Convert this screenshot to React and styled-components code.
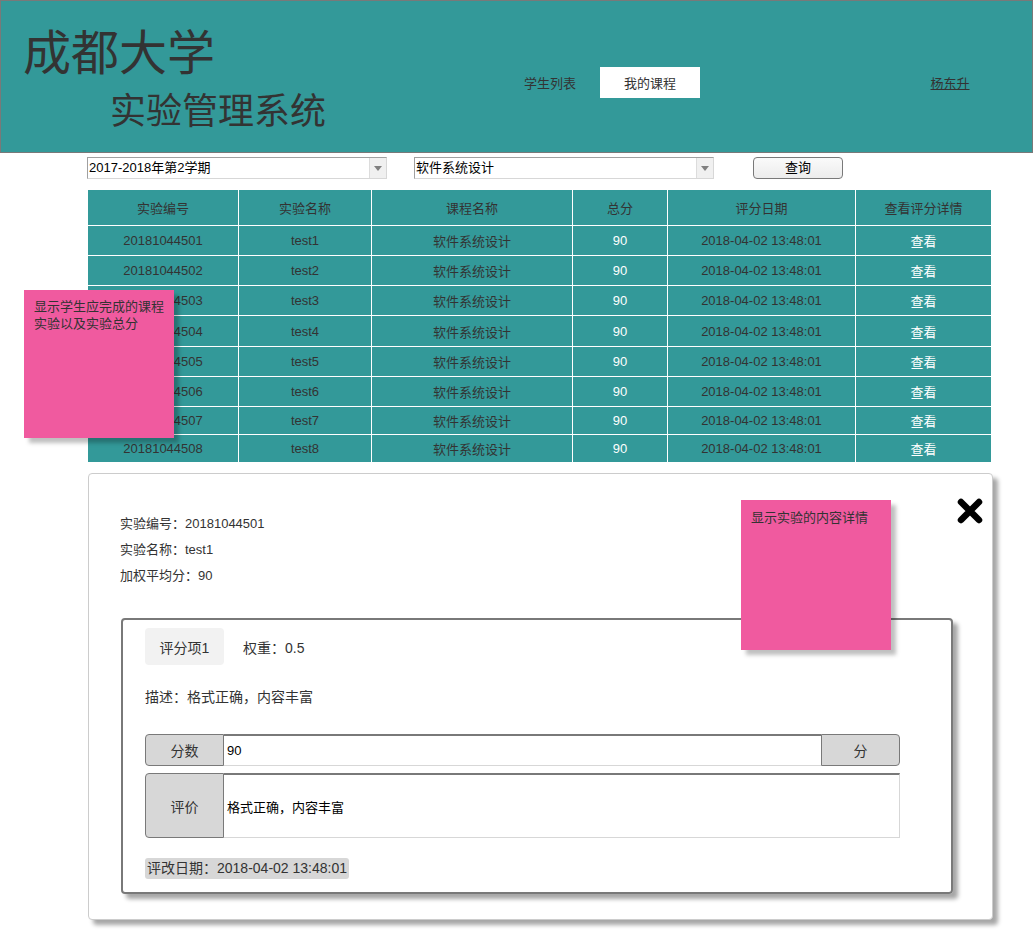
import React from "react";
import styled, { createGlobalStyle } from "styled-components";

const GlobalStyle = createGlobalStyle`
  html, body { margin: 0; padding: 0; background: #ffffff; }
  body { font-family: "Liberation Sans", "Noto Sans CJK SC", Arial, sans-serif; color: #333333; }
  * { box-sizing: border-box; }
`;

const Page = styled.div`
  position: relative;
  width: 1033px;
  min-height: 931px;
`;

const Header = styled.header`
  display: flex;
  height: 153px;
  background: #339999;
  border: 1px solid #797979;
`;

const TitleBlock = styled.div`
  width: 499px;
  padding: 24px 0 0 22px;
  font-family: "Noto Sans CJK SC", sans-serif;
  color: #333333;
`;

const MainTitle = styled.div`
  font-size: 48px;
  line-height: 48px;
`;

const SubTitle = styled.div`
  font-size: 36px;
  line-height: 36px;
  margin: 17px 0 0 87px;
`;

const Nav = styled.nav`
  display: flex;
  align-items: flex-start;
  padding-top: 66px;
  flex: 1;
`;

const NavItem = styled.div`
  width: 100px;
  height: 31px;
  display: flex;
  align-items: center;
  justify-content: center;
  font-family: "Noto Sans CJK SC", sans-serif;
  font-size: 13px;
  color: #333333;
  background: ${(p) => (p.$active ? "#ffffff" : "transparent")};
  margin-left: ${(p) => p.$offset || 0}px;
  text-decoration: ${(p) => (p.$link ? "underline" : "none")};
`;

const Content = styled.main`
  padding-left: 88px;
`;

const FilterRow = styled.div`
  display: flex;
  align-items: center;
  margin: 4px 0 0 -1px;
  height: 22px;
`;

const Select = styled.div`
  display: flex;
  width: 300px;
  height: 22px;
  margin-right: ${(p) => p.$gap || 0}px;
  border: 1px solid #d7d7d7;
  border-top-color: #a0a0a0;
  border-left-color: #a0a0a0;
  background: #ffffff;
`;

const SelectText = styled.div`
  flex: 1;
  padding-left: 1px;
  font-size: 13px;
  line-height: 20px;
  color: #000000;
  white-space: nowrap;
`;

const SelectArrow = styled.div`
  width: 17px;
  height: 20px;
  background: #f0f0f0;
  border-left: 1px solid #dcdcdc;
  display: flex;
  align-items: center;
  justify-content: center;
  &::after {
    content: "";
    border-left: 4px solid transparent;
    border-right: 4px solid transparent;
    border-top: 5px solid #808080;
  }
`;

const QueryButton = styled.button`
  width: 90px;
  height: 22px;
  margin-left: 12px;
  border: 1px solid #797979;
  border-radius: 4px;
  background: linear-gradient(#fafafa, #ececec);
  font-family: "Liberation Sans", "Noto Sans CJK SC", sans-serif;
  font-size: 13px;
  line-height: 18px;
  color: #000000;
  padding: 0;
`;

const Table = styled.div`
  display: grid;
  grid-template-columns: 150px 132px 200px 94px 187px 135px;
  gap: 1px;
  width: 903px;
  margin-top: 11px;
  background: #ffffff;
`;

const Cell = styled.div`
  height: ${(p) => p.$h}px;
  background: #339999;
  display: flex;
  align-items: center;
  justify-content: center;
  font-size: 13px;
  color: ${(p) => (p.$light ? "#ffffff" : "#333333")};
  white-space: nowrap;
`;

const Panel = styled.section`
  position: relative;
  width: 905px;
  height: 447px;
  margin-top: 11px;
  padding: 37px 0 0 31px;
  border: 1px solid #cccccc;
  border-radius: 4px;
  background: #ffffff;
  box-shadow: 5px 5px 4px rgba(0, 0, 0, 0.35);
`;

const CloseButton = styled.div`
  position: absolute;
  top: 23px;
  right: 8px;
  width: 28px;
  height: 28px;
  display: flex;
  align-items: center;
  justify-content: center;
`;

const InfoLine = styled.div`
  font-size: 13px;
  line-height: 26px;
  color: #333333;
`;

const ScoreBox = styled.div`
  width: 832px;
  height: 276px;
  margin: 29px 0 0 1px;
  padding: 8px 0 0 22px;
  border: 2px solid #797979;
  border-radius: 4px;
  box-shadow: 5px 5px 4px rgba(0, 0, 0, 0.35);
  font-size: 14px;
  color: #333333;
`;

const ItemRow = styled.div`
  display: flex;
  align-items: center;
  gap: 19px;
`;

const ItemTag = styled.div`
  width: 79px;
  height: 37px;
  display: flex;
  align-items: center;
  justify-content: center;
  background: #f2f2f2;
  border-radius: 4px;
`;

const Description = styled.div`
  margin-top: 23px;
  line-height: 18px;
`;

const InputGroup = styled.div`
  display: flex;
  width: 755px;
  height: ${(p) => p.$h}px;
  margin-top: ${(p) => p.$mt}px;
`;

const Addon = styled.div`
  width: 79px;
  flex-shrink: 0;
  display: flex;
  align-items: center;
  justify-content: center;
  background: #d7d7d7;
  border: 1px solid #797979;
  border-radius: ${(p) => (p.$right ? "0 4px 4px 0" : "4px 0 0 4px")};
  font-size: 14px;
  color: #333333;
`;

const Field = styled.div`
  flex: 1;
  display: flex;
  align-items: center;
  padding-left: 3px;
  background: #ffffff;
  border: 1px solid #d7d7d7;
  border-top: 2px solid #797979;
  border-left: none;
  border-right: ${(p) => (p.$closed ? "1px solid #d7d7d7" : "none")};
  font-size: 13px;
  color: #000000;
`;

const DateChip = styled.div`
  display: inline-block;
  margin-top: 20px;
  padding: 0 2px;
  height: 21px;
  line-height: 21px;
  background: #d7d7d7;
  border-radius: 3px;
  font-size: 14px;
  color: #333333;
`;

const StickyNote = styled.div`
  position: absolute;
  left: ${(p) => p.$x}px;
  top: ${(p) => p.$y}px;
  width: ${(p) => p.$w}px;
  height: ${(p) => p.$h}px;
  padding: ${(p) => p.$pt}px 6px 0 10px;
  background: #f05a9f;
  box-shadow: 5px 5px 4px rgba(0, 0, 0, 0.25);
  font-size: 13px;
  line-height: 17px;
  color: #333333;
`;

const columns = ["实验编号", "实验名称", "课程名称", "总分", "评分日期", "查看评分详情"];
const rowHeights = [29, 29, 29, 30, 29, 29, 27, 27];
const rows = rowHeights.map((h, i) => ({
  h,
  id: `2018104450${i + 1}`,
  name: `test${i + 1}`,
}));

function CloseIcon() {
  return (
    <svg width="26" height="26" viewBox="0 0 26 26">
      <path d="M4 4 L22 22 M22 4 L4 22" stroke="#000" strokeWidth="6.5" strokeLinecap="round" />
    </svg>
  );
}

export default function App() {
  return (
    <Page>
      <GlobalStyle />
      <Header>
        <TitleBlock>
          <MainTitle>成都大学</MainTitle>
          <SubTitle>实验管理系统</SubTitle>
        </TitleBlock>
        <Nav>
          <NavItem>学生列表</NavItem>
          <NavItem $active>我的课程</NavItem>
          <NavItem $offset={200} $link>杨东升</NavItem>
        </Nav>
      </Header>

      <Content>
        <FilterRow>
          <Select $gap={27}>
            <SelectText>2017-2018年第2学期</SelectText>
            <SelectArrow />
          </Select>
          <Select $gap={27}>
            <SelectText>软件系统设计</SelectText>
            <SelectArrow />
          </Select>
          <QueryButton>查询</QueryButton>
        </FilterRow>

        <Table>
          {columns.map((c) => (
            <Cell key={c} $h={35}>{c}</Cell>
          ))}
          {rows.map((r) => (
            <React.Fragment key={r.id}>
              <Cell $h={r.h}>{r.id}</Cell>
              <Cell $h={r.h}>{r.name}</Cell>
              <Cell $h={r.h}>软件系统设计</Cell>
              <Cell $h={r.h} $light>90</Cell>
              <Cell $h={r.h}>2018-04-02 13:48:01</Cell>
              <Cell $h={r.h} $light>查看</Cell>
            </React.Fragment>
          ))}
        </Table>

        <Panel>
          <CloseButton>
            <CloseIcon />
          </CloseButton>
          <InfoLine>实验编号：20181044501</InfoLine>
          <InfoLine>实验名称：test1</InfoLine>
          <InfoLine>加权平均分：90</InfoLine>

          <ScoreBox>
            <ItemRow>
              <ItemTag>评分项1</ItemTag>
              <span>权重：0.5</span>
            </ItemRow>
            <Description>描述：格式正确，内容丰富</Description>
            <InputGroup $h={32} $mt={28}>
              <Addon>分数</Addon>
              <Field>90</Field>
              <Addon $right>分</Addon>
            </InputGroup>
            <InputGroup $h={65} $mt={7}>
              <Addon>评价</Addon>
              <Field $closed>格式正确，内容丰富</Field>
            </InputGroup>
            <DateChip>评改日期：2018-04-02 13:48:01</DateChip>
          </ScoreBox>
        </Panel>
      </Content>

      <StickyNote $x={24} $y={290} $w={150} $h={148} $pt={8}>
        显示学生应完成的课程实验以及实验总分
      </StickyNote>
      <StickyNote $x={741} $y={500} $w={150} $h={150} $pt={9}>
        显示实验的内容详情
      </StickyNote>
    </Page>
  );
}
